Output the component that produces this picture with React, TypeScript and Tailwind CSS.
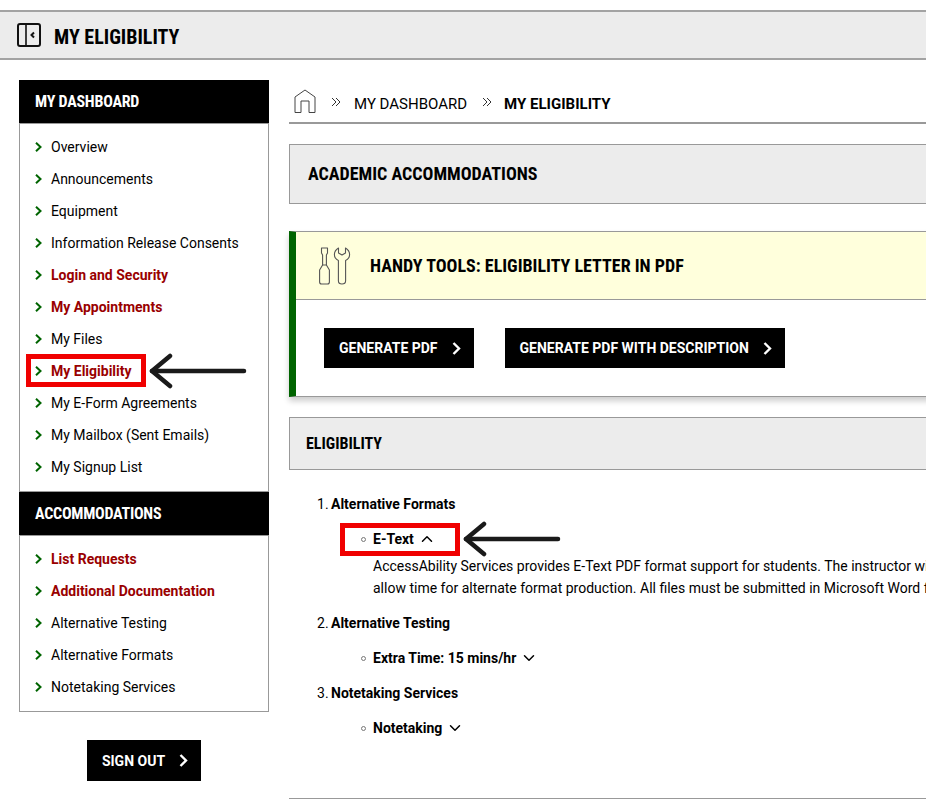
import { ChevronDown, ChevronUp } from "lucide-react";

const dashboardLinks = [
  { label: "Overview" },
  { label: "Announcements" },
  { label: "Equipment" },
  { label: "Information Release Consents" },
  { label: "Login and Security", red: true },
  { label: "My Appointments", red: true },
  { label: "My Files" },
  { label: "My Eligibility", red: true, marked: true },
  { label: "My E-Form Agreements" },
  { label: "My Mailbox (Sent Emails)" },
  { label: "My Signup List" },
];

const accommodationLinks = [
  { label: "List Requests", red: true },
  { label: "Additional Documentation", red: true },
  { label: "Alternative Testing" },
  { label: "Alternative Formats" },
  { label: "Notetaking Services" },
];

function HandArrow({ className }: { className: string }) {
  return (
    <svg className={className} width="98" height="36" viewBox="0 0 98 36" fill="none" stroke="#1a1a1a" strokeWidth="4.5" strokeLinecap="round" strokeLinejoin="round">
      <path d="M3 18 L95 18" />
      <path d="M21 3 L3 18 L21 33" />
    </svg>
  );
}

function NavItem({ label, red, marked }: { label: string; red?: boolean; marked?: boolean }) {
  return (
    <li className="relative flex h-8 items-center pl-[15px]">
      <svg width="7" height="10" viewBox="0 0 7 10" fill="none" stroke="#006400" strokeWidth="2" className="mr-[9px]">
        <path d="M1 0.8 L5.5 5 L1 9.2" />
      </svg>
      <span className={red ? "text-sm font-bold text-[#990000]" : "text-sm text-black"}>{label}</span>
      {marked && (
        <>
          <div className="absolute left-[6px] top-[-1px] h-[33px] w-[120px] border-[5px] border-[#f00000]" />
          <HandArrow className="absolute left-[129px] top-[-2px]" />
        </>
      )}
    </li>
  );
}

function Sidebar() {
  return (
    <aside className="w-[250px] shrink-0">
      <div className="border border-t-0 border-[#999]">
        <h2 className="mx-[-1px] flex h-[43px] items-center bg-black pl-4 text-base font-bold tracking-[-0.25px] text-white [font-stretch:75%]">MY DASHBOARD</h2>
        <ul className="border-t border-[#999] pb-2 pt-[7px]">
          {dashboardLinks.map((l) => (
            <NavItem key={l.label} {...l} />
          ))}
        </ul>
        <h2 className="mx-[-1px] flex h-[44px] items-center border-t border-[#999] bg-black pl-4 text-base font-bold tracking-[-0.25px] text-white [font-stretch:75%]">ACCOMMODATIONS</h2>
        <ul className="border-t border-[#999] pb-2 pt-[7px]">
          {accommodationLinks.map((l) => (
            <NavItem key={l.label} {...l} />
          ))}
        </ul>
      </div>
      <div className="mt-7 flex justify-center">
        <BlackButton label="SIGN OUT" tall />
      </div>
    </aside>
  );
}

function BlackButton({ label, tall }: { label: string; tall?: boolean }) {
  return (
    <button className={`flex items-center bg-black pl-[15px] pr-[13px] text-sm font-bold text-white ${tall ? "h-[41px]" : "h-10"}`}>
      {label}
      <svg width="9" height="13" viewBox="0 0 9 13" fill="none" stroke="white" strokeWidth="2.4" className="ml-[14px]">
        <path d="M1.5 1 L7 6.5 L1.5 12" />
      </svg>
    </button>
  );
}

function DoubleChevron() {
  return (
    <svg width="10" height="10" viewBox="0 0 10 10" fill="none" stroke="#333" strokeWidth="1">
      <path d="M1 1 L5 5 L1 9" />
      <path d="M5 1 L9 5 L5 9" />
    </svg>
  );
}

function Breadcrumb() {
  return (
    <nav className="flex h-11 items-center border-b-2 border-[#999] pl-[5px] text-black">
      <svg width="22" height="24" viewBox="0 0 22 24" fill="none" stroke="#444" strokeWidth="1">
        <path d="M1 23.5 V8 L11 1 L21 8 V23.5 H15 V12 H7 V23.5 Z" />
      </svg>
      <span className="ml-[15px] mt-[2px]"><DoubleChevron /></span>
      <span className="ml-[13px] mt-[6px] text-[15px]">MY DASHBOARD</span>
      <span className="ml-[15px] mt-[2px]"><DoubleChevron /></span>
      <span className="ml-[12px] mt-[6px] text-[15px] font-bold">MY ELIGIBILITY</span>
    </nav>
  );
}

function ToolsIcon() {
  return (
    <svg width="34" height="40" viewBox="0 0 34 40" fill="none" stroke="#555" strokeWidth="1.1" strokeLinejoin="round" strokeLinecap="round">
      <path d="M3.5 2 H9.5 L9.5 7 L8.4 9 V19 H4.6 V9 L3.5 7 Z" />
      <path d="M4.6 19 L1.6 24 V36 Q1.6 38 3.6 38 H9.4 Q11.4 38 11.4 36 V24 L8.4 19" />
      <path d="M20.5 2 Q16.4 4.5 16.4 8.5 Q16.4 12.5 20.4 14.5 V35 Q20.4 38 24 38 Q27.6 38 27.6 35 V14.5 Q31.6 12.5 31.6 8.5 Q31.6 4.5 27.5 2 V7 L24 9 L20.5 7 Z" />
    </svg>
  );
}

function ListEntry({ n, title, children }: { n: number; title: string; children: React.ReactNode }) {
  return (
    <li className="flex flex-col">
      <div className="flex h-5 items-center text-sm">
        <span className="w-[14px]">{n}.</span>
        <span className="font-bold">{title}</span>
      </div>
      {children}
    </li>
  );
}

function SubEntry({ label, open }: { label: string; open?: boolean }) {
  return (
    <div className="relative mt-[15px] flex h-5 items-center pl-[44px] text-sm font-bold">
      <span className="mr-[7px] size-[5px] rounded-full border border-[#777]" />
      {label}
      {open ? <ChevronUp size={18} strokeWidth={2} className="ml-[4px]" /> : <ChevronDown size={18} strokeWidth={2} className="ml-[4px]" />}
      {open && (
        <>
          <div className="absolute left-[23px] top-[-6px] h-[33px] w-[120px] border-[5px] border-[#f00000]" />
          <HandArrow className="absolute left-[146px] top-[-8px]" />
        </>
      )}
    </div>
  );
}

export default function App() {
  return (
    <div className="h-[799px] w-full overflow-hidden bg-white pt-[10px] text-black [font-family:Roboto,sans-serif]">
      <header className="flex h-[50px] w-full items-center border-y-2 border-[#a3a3a3] bg-[#ececec] pl-[17px]">
        <svg width="24" height="24" viewBox="0 0 24 24" fill="none" stroke="#111" strokeWidth="2">
          <rect x="1" y="1" width="22" height="22" rx="2" />
          <path d="M9 1 V23" strokeWidth="1.6" />
          <path d="M17 9.5 L14.5 12 L17 14.5" />
        </svg>
        <h1 className="ml-[13px] mt-1 text-xl font-bold [font-stretch:75%]">MY ELIGIBILITY</h1>
      </header>

      <div className="flex w-[1200px] items-start gap-5 pl-[19px] pt-5">
        <Sidebar />
        <main className="w-[900px] shrink-0">
          <Breadcrumb />

          <section className="mt-5 flex h-[60px] items-center border border-[#999] bg-[#ececec] pl-[18px]">
            <h2 className="text-lg font-bold [font-stretch:75%]">ACADEMIC ACCOMMODATIONS</h2>
          </section>

          <section className="mt-[27px] h-[166px] border-b border-l-[7px] border-t border-[#999] border-l-[#006400] shadow-[0_4px_6px_rgba(0,0,0,0.2)]">
            <div className="flex h-[68px] items-center border-b border-[#999] bg-[#ffffdc] pl-[22px]">
              <ToolsIcon />
              <h3 className="ml-[18px] text-lg font-bold [font-stretch:75%]">HANDY TOOLS: ELIGIBILITY LETTER IN PDF</h3>
            </div>
            <div className="flex gap-[31px] pl-[28px] pt-7">
              <BlackButton label="GENERATE PDF" />
              <BlackButton label="GENERATE PDF WITH DESCRIPTION" />
            </div>
          </section>

          <section className="mt-5 flex h-[53px] items-center border border-[#999] bg-[#ececec] pl-4">
            <h2 className="text-base font-bold [font-stretch:75%]">ELIGIBILITY</h2>
          </section>

          <ol className="flex flex-col gap-[15px] pl-[28px] pt-6">
            <ListEntry n={1} title="Alternative Formats">
              <SubEntry label="E-Text" open />
              <div className="mb-[-1px] mt-[6px] whitespace-nowrap pl-[56px] text-sm leading-[22px]">
                <p>AccessAbility Services provides E-Text PDF format support for students. The instructor will</p>
                <p>allow time for alternate format production. All files must be submitted in Microsoft Word format</p>
              </div>
            </ListEntry>
            <ListEntry n={2} title="Alternative Testing">
              <SubEntry label="Extra Time: 15 mins/hr" />
            </ListEntry>
            <ListEntry n={3} title="Notetaking Services">
              <SubEntry label="Notetaking" />
            </ListEntry>
          </ol>
          <div className="mt-[60px] border-t border-[#999]" />
        </main>
      </div>
    </div>
  );
}
